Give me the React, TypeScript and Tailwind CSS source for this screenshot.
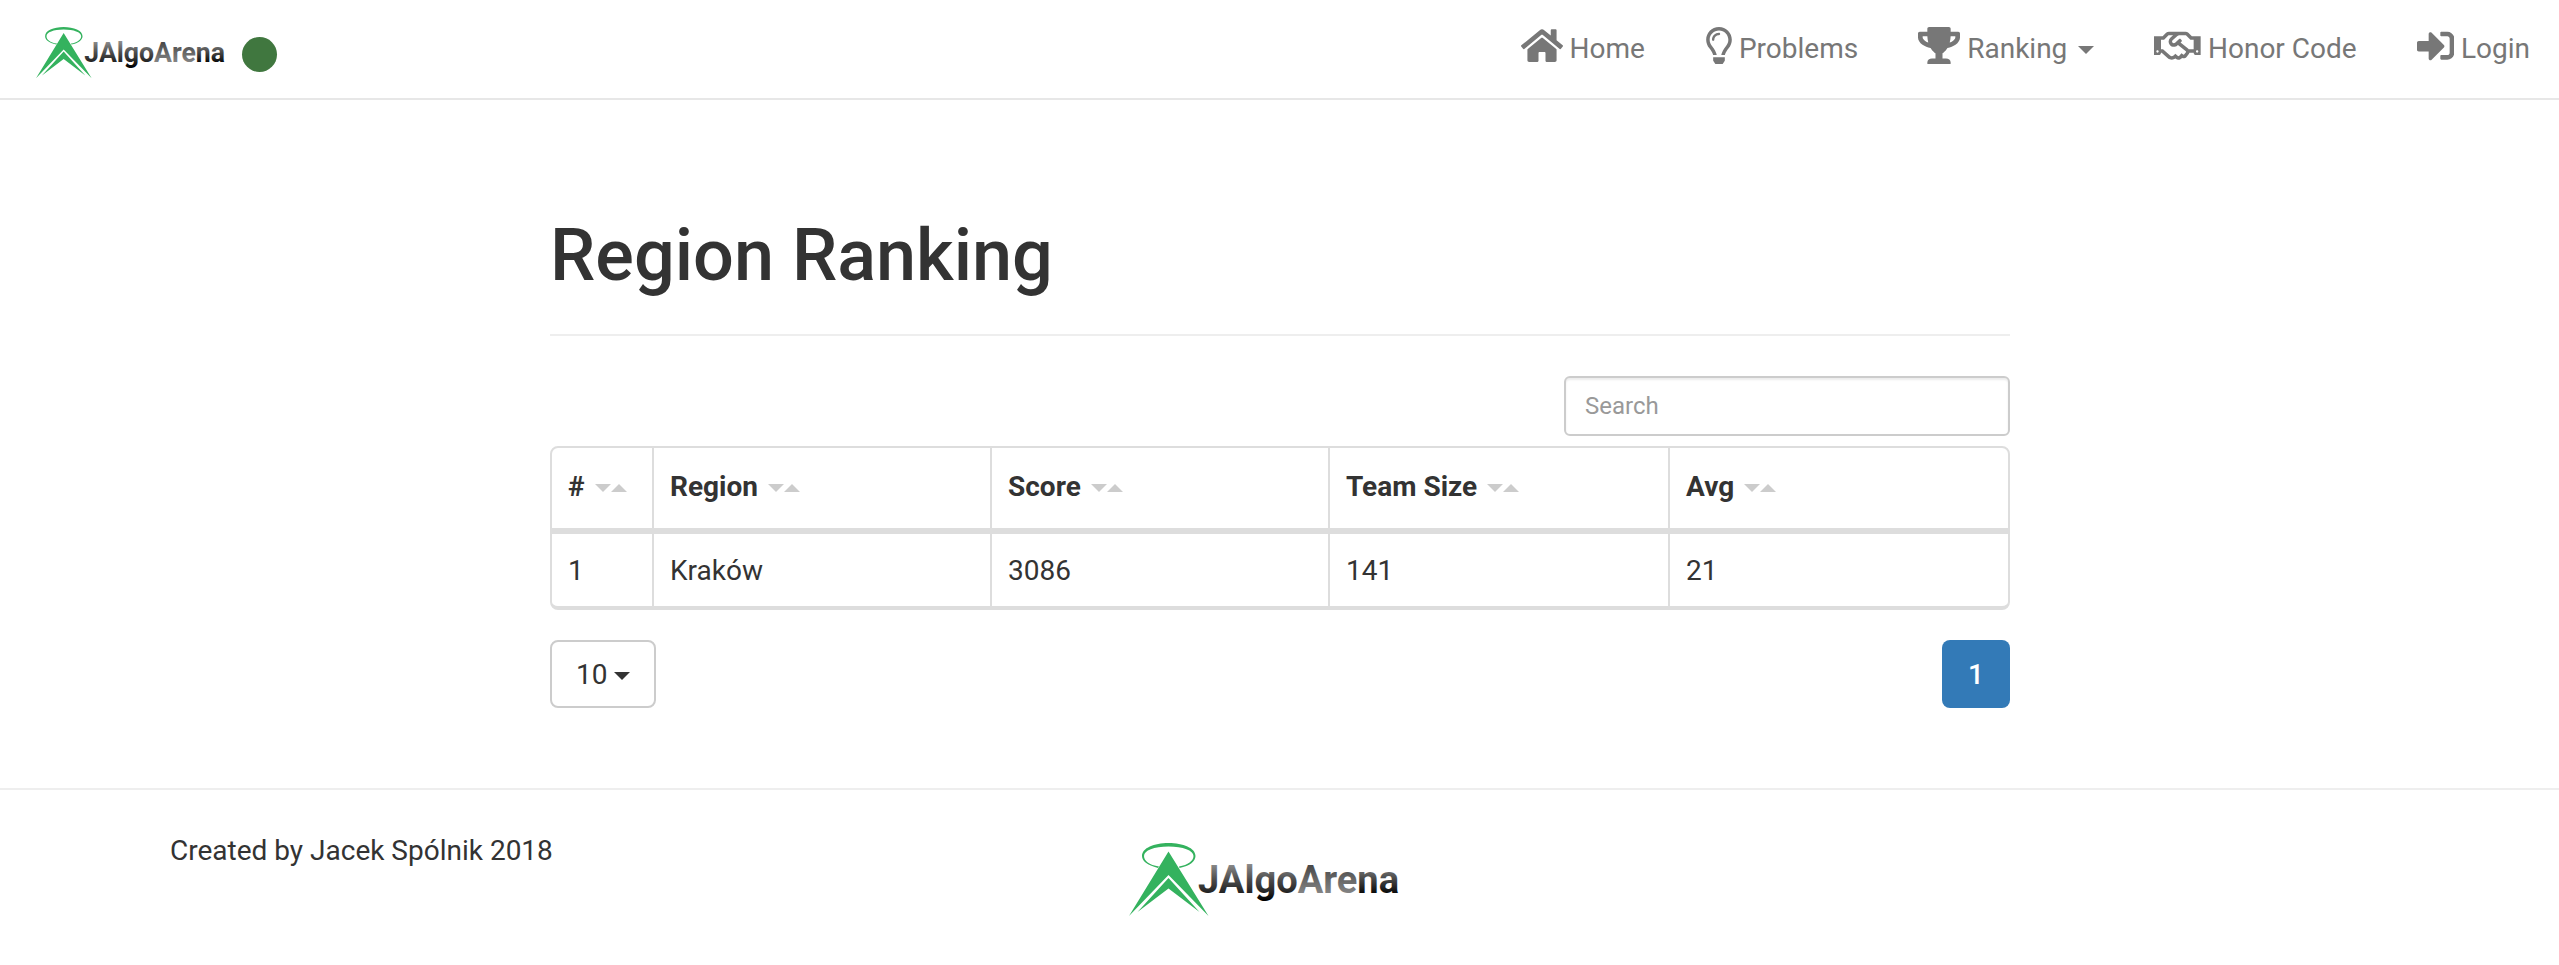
import { FaRegLightbulb, FaTrophy, FaRegHandshake, FaSignInAlt } from "react-icons/fa";
import type { ReactNode } from "react";

function HomeIcon({ className }: { className?: string }) {
  return (
    <svg viewBox="0 0 576 512" fill="currentColor" className={className}>
      <path d="M488 312.7V456c0 13.3-10.7 24-24 24H348c-6.6 0-12-5.4-12-12V356c0-6.6-5.4-12-12-12h-72c-6.6 0-12 5.4-12 12v112c0 6.6-5.4 12-12 12H112c-13.3 0-24-10.7-24-24V312.7c0-3.6 1.6-7 4.4-9.3l188-154.8c4.4-3.6 10.8-3.6 15.3 0l188 154.8c2.7 2.3 4.3 5.7 4.3 9.3zm83.6-60.9L488 182.9V44.4c0-6.6-5.4-12-12-12h-56c-6.6 0-12 5.4-12 12V117l-89.5-73.7c-17.7-14.6-43.3-14.6-61 0L4.4 251.8c-5.1 4.2-5.8 11.8-1.6 16.9l25.5 31c4.2 5.1 11.8 5.8 16.9 1.6l235.2-193.7c4.4-3.6 10.8-3.6 15.3 0l235.2 193.7c5.1 4.2 12.7 3.5 16.9-1.6l25.5-31c4.2-5.2 3.4-12.7-1.7-16.9z" />
    </svg>
  );
}

function Logo({ id, className }: { id: string; className?: string }) {
  return (
    <svg viewBox="0 0 270 74" preserveAspectRatio="none" className={className} role="img" aria-label="JAlgoArena">
      <defs>
        <linearGradient id={id + "-a"} gradientUnits="userSpaceOnUse" x1="0" y1="21" x2="0" y2="57">
          <stop offset="0" stopColor="#8c8c8c" />
          <stop offset="0.45" stopColor="#4a4a4a" />
          <stop offset="0.8" stopColor="#222" />
          <stop offset="1" stopColor="#000" />
        </linearGradient>
        <linearGradient id={id + "-b"} gradientUnits="userSpaceOnUse" x1="0" y1="22" x2="0" y2="50">
          <stop offset="0" stopColor="#484848" />
          <stop offset="1" stopColor="#848484" />
        </linearGradient>
        <linearGradient id={id + "-c"} gradientUnits="userSpaceOnUse" x1="0" y1="29" x2="0" y2="50">
          <stop offset="0" stopColor="#666" />
          <stop offset="1" stopColor="#0a0a0a" />
        </linearGradient>
      </defs>
      <g fill="#34b25e">
        <path
          fillRule="evenodd"
          d="M29 25C18 22 13 18 13 13C13 5 25 0 39.5 0S66.5 5 66.5 13C66.5 18 61 23 50.5 25L50 23.5C59 22 64.5 18 64.5 13C64.5 7.5 54 3.5 39.5 3.5S15 7.5 15 13C15 18 20 22 30 23.5Z"
        />
        <path d="M39.5 8.5L79.5 73L39.5 32L0 73Z" />
        <path d="M39.5 35L70.5 69L39.5 45.5L8.5 69Z" />
      </g>
      <text
        x="69"
        y="50"
        textLength="201"
        lengthAdjust="spacingAndGlyphs"
        fontFamily="Roboto, sans-serif"
        fontWeight="700"
        fontSize="39"
        fill={`url(#${id}-a)`}
      >
        JAlgo
        <tspan fill={`url(#${id}-b)`}>Are</tspan>
        <tspan fill={`url(#${id}-c)`}>na</tspan>
      </text>
    </svg>
  );
}

function CaretDown({ className }: { className?: string }) {
  return (
    <svg viewBox="0 0 16 8" fill="currentColor" className={className}>
      <path d="M0 0H16L8 8Z" />
    </svg>
  );
}

function SortCarets() {
  return (
    <svg viewBox="0 0 32 8" fill="#ccc" className="ml-[10px] mt-0.5 h-2 w-8 shrink-0">
      <path d="M0 0H16L8 8ZM16 8H32L24 0Z" />
    </svg>
  );
}

function NavItem({ icon, label, children }: { icon: ReactNode; label: string; children?: ReactNode }) {
  return (
    <a href="#" className="flex h-[38px] items-start text-[#777] first:mr-px">
      {icon}
      <span className="ml-[7px] mt-0.5 whitespace-nowrap">{label}</span>
      {children}
    </a>
  );
}

const columns = ["#", "Region", "Score", "Team Size", "Avg"];
const rows = [["1", "Kraków", "3086", "141", "21"]];

export default function App() {
  return (
    <div className="flex h-[965px] w-full flex-col overflow-hidden bg-white font-[Roboto,sans-serif] text-[28px] leading-[40px] text-[#333]">
      <nav className="flex h-[100px] shrink-0 items-start border-b-2 border-[#e7e7e7] pl-9 pr-[29px] pt-[27px]">
        <Logo id="nav-logo" className="h-[52px] w-[189px] overflow-visible" />
        <span className="ml-[17px] mt-[10px] size-[35px] rounded-full bg-[#40773f]" />
        <div className="ml-auto flex gap-[60px]">
          <NavItem icon={<HomeIcon className="h-[37.33px] w-[42px]" />} label="Home" />
          <NavItem icon={<FaRegLightbulb className="h-[37.33px] w-[26px]" />} label="Problems" />
          <NavItem icon={<FaTrophy className="h-[37.33px] w-[42px]" />} label="Ranking">
            <CaretDown className="ml-[11px] mt-[19px] h-2 w-4" />
          </NavItem>
          <NavItem icon={<FaRegHandshake className="h-[37.33px] w-[46.66px]" />} label="Honor Code" />
          <NavItem icon={<FaSignInAlt className="h-[37.33px] w-[37.33px]" />} label="Login" />
        </div>
      </nav>

      <main className="ml-[550px] w-[1460px] shrink-0">
        <h1 className="mt-[116px] text-[72px] font-medium leading-[79px]">Region Ranking</h1>
        <hr className="mt-[39px] border-t-2 border-[#eee]" />
        <div className="mt-10 flex justify-end">
          <input
            placeholder="Search"
            className="h-[60px] w-[446px] rounded-[6px] border-2 border-[#ccc] px-[19px] text-[24px] leading-9 shadow-[inset_0_2px_2px_rgba(0,0,0,0.075)] placeholder:text-[#999]"
          />
        </div>
        <div className="mt-[10px] overflow-hidden rounded-[8px] border-2 border-b-4 border-[#ddd]">
          <div className="grid grid-cols-[102px_338px_338px_340px_1fr] border-b-[6px] border-[#ddd]">
            {columns.map((name) => (
              <div key={name} className="flex h-20 items-center border-r-2 border-[#ddd] px-4 pb-0.5 font-bold last:border-r-0">
                {name}
                <SortCarets />
              </div>
            ))}
          </div>
          {rows.map((row) => (
            <div key={row[0]} className="grid grid-cols-[102px_338px_338px_340px_1fr]">
              {row.map((cell) => (
                <div key={cell} className="border-r-2 border-[#ddd] px-4 pb-[15px] pt-[17px] last:border-r-0">
                  {cell}
                </div>
              ))}
            </div>
          ))}
        </div>
        <div className="mt-[30px] flex justify-between">
          <button className="flex h-[68px] w-[106px] items-center justify-between rounded-[8px] border-2 border-[#ccc] px-6 pt-0.5">
            10
            <CaretDown className="mt-0.5 h-2 w-4" />
          </button>
          <button className="size-[68px] rounded-[8px] bg-[#337ab7] pt-0.5 font-medium text-white">1</button>
        </div>
      </main>

      <footer className="mt-20 flex shrink-0 border-t-2 border-[#eee]">
        <p className="ml-[170px] mt-[41px] w-[959px]">Created by Jacek Spólnik 2018</p>
        <Logo id="footer-logo" className="mt-[53px] h-[74px] w-[270px] overflow-visible" />
      </footer>
    </div>
  );
}
